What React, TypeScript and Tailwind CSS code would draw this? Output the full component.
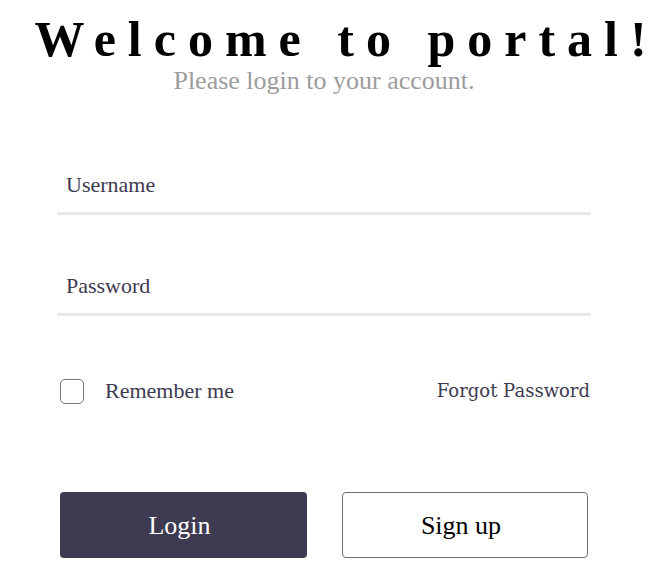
import { useState } from "react";

export default function App() {
	const [remember, setRemember] = useState(false);

	return (
		<div className="min-h-screen w-full bg-white font-['Liberation_Serif',serif]">
			<div className="flex flex-col items-center pt-[11px]">
				<h1 className="whitespace-nowrap pl-[28px] text-[50px] leading-[56px] font-bold tracking-[12px] text-black">
					Welcome to portal!
				</h1>
				<p className="pr-[17px] text-[26px] leading-[28px] text-[#9c9c9c]">
					Please login to your account.
				</p>
			</div>

			<form
				className="ml-[57px] mt-[77px] flex w-[534px] flex-col"
				onSubmit={(e) => e.preventDefault()}
			>
				<label className="block border-b-[3px] border-[#e8e8ee] pb-[14px] pl-[9px] text-[22px] leading-[26px] text-[#3d3a52]">
					Username
				</label>
				<label className="mt-[58px] block border-b-[3px] border-[#e8e8ee] pb-[14px] pl-[9px] text-[22px] leading-[26px] text-[#3d3a52]">
					Password
				</label>

				<div className="mt-[62px] flex items-center justify-between pl-[3px] text-[22px] leading-[26px] text-[#3d3a52]">
					<label className="flex items-center gap-[21px]">
						<span
							onClick={() => setRemember(!remember)}
							className="block h-[25px] w-[24px] rounded-[5px] border-[1.5px] border-[#77758a]"
						/>
						Remember me
					</label>
					<a className="pr-[1px] font-['DejaVu_Serif',serif] text-[18px]">Forgot Password</a>
				</div>

				<div className="mt-[88px] flex justify-between pl-[3px] pr-[3px]">
					<button className="h-[66px] w-[247px] rounded-[4px] bg-[#3d3a52] pr-[8px] text-[26px] text-white">
						Login
					</button>
					<button className="h-[66px] w-[246px] rounded-[4px] border-[1.5px] border-[#6e6c80] bg-white pr-[8px] text-[26px] text-black">
						Sign up
					</button>
				</div>
			</form>
		</div>
	);
}
